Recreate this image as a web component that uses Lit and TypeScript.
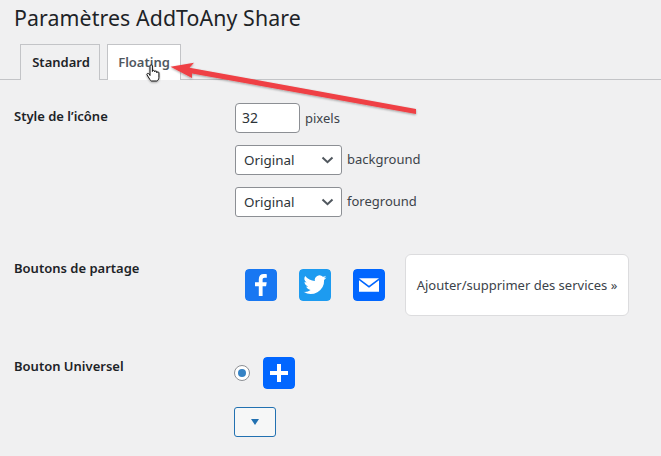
import { LitElement, html, css } from "lit";
import { customElement } from "lit/decorators.js";

@customElement("app-root")
export class AppRoot extends LitElement {
  static styles = css`
    :host { display: block; position: relative; width: 661px; height: 456px; overflow: hidden; background: #f0f0f1; color: #3c434a; font-family: "Noto Sans", "Open Sans", sans-serif; font-size: 13px; }
    h1 { margin: 0; padding: 4px 0 0 14px; height: 44px; box-sizing: border-box; font-size: 21.3px; font-weight: 400; line-height: 28px; color: #1d2327; letter-spacing: .1px; }
    .tabs { display: flex; gap: 7px; padding-left: 20px; height: 36px; box-sizing: border-box; border-bottom: 1px solid #c3c4c7; }
    .tab { box-sizing: border-box; height: 36px; border: 1px solid #c3c4c7; border-bottom: none; display: flex; align-items: center; justify-content: center; font-weight: 600; font-size: 13px; padding-bottom: 2px; }
    .tab.std { width: 80px; background: #f0f0f1; color: #1d2327; padding-left: 2px; }
    .tab.flo { width: 74px; background: #fff; color: #50575e; }
    .form { padding: 27px 0 0 14px; display: grid; grid-template-columns: 221px 1fr; grid-template-rows: 152px 103px auto; }
    .label { font-weight: 600; font-size: 13px; color: #1d2327; line-height: 18px; }
    .stack { display: flex; flex-direction: column; gap: 13px; margin-top: -4px; }
    .line { display: flex; align-items: center; gap: 5px; height: 29px; line-height: 26px; }
    .input { box-sizing: border-box; width: 65px; height: 30px; background: #fff; border: 1px solid #8c8f94; border-radius: 4px; padding-left: 6px; color: #2c3338; font-size: 14px; display: flex; align-items: center; }
    .select { box-sizing: border-box; width: 107px; height: 30px; background: #fff; border: 1px solid #8c8f94; border-radius: 3px; padding: 0 7px 0 8px; color: #2c3338; font-size: 13.4px; display: flex; align-items: center; justify-content: space-between; }
    .select svg { display: block; }
    .t { position: relative; top: -1px; }
    .t.first { top: 0; }
    .share { display: flex; align-items: center; margin-top: -5px; height: 62px; padding-left: 10px; }
    .ic { width: 32px; height: 32px; border-radius: 4px; display: block; }
    .share .ic + .ic { margin-left: 22px; }
    .svc { box-sizing: border-box; width: 224px; height: 62px; margin-left: 20px; background: #fff; border: 1px solid #dcdcde; border-radius: 6px; display: flex; align-items: center; justify-content: center; font-size: 13px; white-space: nowrap; color: #3c434a; }
    .uni { margin-top: -5px; }
    .radio-row { display: flex; align-items: center; gap: 13px; margin-left: -1px; }
    .radio { box-sizing: border-box; width: 16px; height: 16px; border: 1px solid #8c8f94; border-radius: 50%; background: #fff; display: flex; align-items: center; justify-content: center; }
    .radio i { width: 8px; height: 8px; border-radius: 50%; background: #3582c4; display: block; }
    .drop { box-sizing: border-box; width: 42px; height: 30px; margin: 18px 0 0 -1px; border: 1px solid #2271b1; border-radius: 3px; background: #f6f7f7; display: flex; align-items: center; justify-content: center; }
    .overlay { position: absolute; left: 0; top: 0; pointer-events: none; }
  `;

  render() {
    const chev = html`<svg width="13" height="8" viewBox="0 0 13 8"><path d="M1.500 1.500 6.500 6.200 11.500 1.500" fill="none" stroke="#50575e" stroke-width="2"/></svg>`;
    return html`
      <h1>Paramètres AddToAny Share</h1>
      <div class="tabs">
        <div class="tab std">Standard</div>
        <div class="tab flo">Floating</div>
      </div>
      <div class="form">
        <div class="label">Style de l’icône</div>
        <div class="stack">
          <div class="line"><div class="input">32</div><span class="t first">pixels</span></div>
          <div class="line"><div class="select">Original ${chev}</div><span class="t">background</span></div>
          <div class="line"><div class="select">Original ${chev}</div><span class="t">foreground</span></div>
        </div>
        <div class="label">Boutons de partage</div>
        <div class="share">
          <svg class="ic" viewBox="0 0 32 32"><rect width="32" height="32" rx="4" fill="#1877f2"/><path fill="#fff" d="M17.600 27V17.200h3.500l.6-4h-4.100v-2.500c0-1.200.5-2 2.100-2h2.100V5.200c-.6-.1-1.700-.2-3-.2-3.100 0-5 1.800-5 5.200v3H10v4h3.800V27z"/></svg>
          <svg class="ic" viewBox="0 0 32 32"><rect width="32" height="32" rx="4" fill="#1d9bf0"/><path fill="#fff" d="M27.500 8.600c-.9.4-1.800.6-2.700.7 1-.6 1.700-1.500 2.100-2.600-.9.5-1.900.9-3 1.100a4.700 4.700 0 0 0-8 4.300C12 11.900 8.500 10 6.200 7.100a4.700 4.700 0 0 0 1.400 6.300c-.8 0-1.500-.2-2.100-.6 0 2.300 1.600 4.200 3.800 4.700-.7.200-1.400.2-2.100.1.6 1.900 2.300 3.200 4.400 3.300A9.500 9.500 0 0 1 4.500 22.800 13.400 13.400 0 0 0 25.100 11c.9-.7 1.700-1.500 2.400-2.400z"/></svg>
          <svg class="ic" viewBox="0 0 32 32"><rect width="32" height="32" rx="4" fill="#0166ff"/><path fill="#fff" d="M6 9.300h20L16 16.800zM6 11.200V22.700h20V11.200l-10 7.600z"/></svg>
          <div class="svc">Ajouter/supprimer des services »</div>
        </div>
        <div class="label uni">Bouton Universel</div>
        <div class="uni">
          <div class="radio-row">
            <div class="radio"><i></i></div>
            <svg class="ic" viewBox="0 0 32 32"><rect width="32" height="32" rx="4" fill="#0166ff"/><path fill="#fff" d="M14 7h4v7h7v4h-7v7h-4v-7H7v-4h7z"/></svg>
          </div>
          <div class="drop"><svg width="8" height="6" viewBox="0 0 8 6"><path d="M0 0h8L4 6z" fill="#2271b1"/></svg></div>
        </div>
      </div>
      <svg class="overlay" width="661" height="456" viewBox="0 0 661 456">
        <defs><filter id="s" x="-10%" y="-30%" width="120%" height="160%"><feDropShadow dx="0" dy="1" stdDeviation="0.8" flood-color="#000" flood-opacity=".35"/></filter></defs>
        <path filter="url(#s)" fill="#ef4044" d="M170.500 66.700 194 62.700 189.500 67.800 416 109 416 114 192 73.500 192 78z"/>
        <g transform="translate(-1.500 -4)">
          <path filter="url(#s)" fill="#fff" stroke="#111" stroke-width="1" stroke-linejoin="round" d="M151.500 79.500v-9.500c0-1.600 2.400-1.600 2.400 0v5.500c0-1.500 2.200-1.500 2.200 0v.5c0-1.400 2.200-1.400 2.200 0v.8c0-1.300 2.100-1.300 2.100 0v4.600c0 2-1.200 3.600-2.500 3.600h-4.500c-1 0-1.500-.5-2-1.500l-2.800-4.500c-.8-1.400 1-2.300 2-1z"/>
        </g>
      </svg>
    `;
  }
}
